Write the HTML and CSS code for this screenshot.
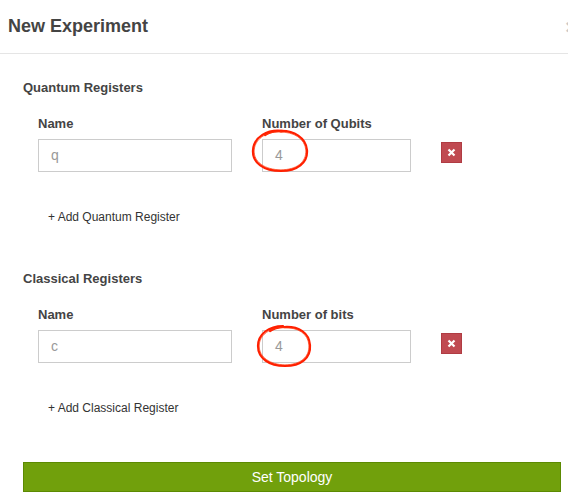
FILE: index.html
```html
<!DOCTYPE html>
<html>
<head>
<meta charset="utf-8">
<link rel="stylesheet" href="styles.css">
</head>
<body>
<div class="modal">
  <div class="modal-header">
    <h1 class="title">New Experiment</h1>
    <span class="close">×</span>
  </div>
  <div class="modal-body">
    <section class="section">
      <h2 class="section-title">Quantum Registers</h2>
      <div class="reg-row">
        <div class="field field-name">
          <label class="label">Name</label>
          <div class="input">q</div>
        </div>
        <div class="field field-num">
          <label class="label">Number of Qubits</label>
          <div class="input num-input">4
            <svg class="mark" width="64" height="46" viewBox="0 0 64 46"><path d="M34 3 C18 1 5 9 4 22 C3 35 15 43 32 43 C48 43 59 35 58 22 C57 10 45 2 30 3 C24 3.5 19 5 16 7" fill="none" stroke="#ff1f00" stroke-width="2.2" stroke-linecap="round"/><path d="M33 4.2 C19 2.5 6.2 10 5.2 22 C4.3 34 16 41.8 32 41.8 C47 41.8 57.6 34.5 56.8 22 C56 11 45 3.5 31 4.2" fill="none" stroke="#ff3a10" stroke-width="1" stroke-linecap="round" opacity="0.7"/></svg>
          </div>
        </div>
        <button class="del" aria-label="remove"><svg width="9" height="9" viewBox="0 0 9 9"><path d="M1.5 1.5 L7.5 7.5 M7.5 1.5 L1.5 7.5" stroke="#fff" stroke-width="2.2"/></svg></button>
      </div>
      <div class="add-link">+ Add Quantum Register</div>
    </section>
    <section class="section">
      <h2 class="section-title">Classical Registers</h2>
      <div class="reg-row">
        <div class="field field-name">
          <label class="label">Name</label>
          <div class="input">c</div>
        </div>
        <div class="field field-num">
          <label class="label">Number of bits</label>
          <div class="input num-input">4
            <svg class="mark mark2" width="64" height="46" viewBox="0 0 64 46"><path d="M30 3 C16 3 5 11 5 23 C5 35 16 43 32 43 C48 43 58 35 57 22 C56 10 46 3 31 4 C25 4.5 20 6 17 8" fill="none" stroke="#ff1f00" stroke-width="2.2" stroke-linecap="round"/><path d="M31 4.3 C17 4.3 6.2 12 6.2 23 C6.2 34 17 41.8 32 41.8 C47 41.8 56.6 34.3 55.9 22 C55 11 45.5 4 31 5" fill="none" stroke="#ff3a10" stroke-width="1" stroke-linecap="round" opacity="0.7"/></svg>
          </div>
        </div>
        <button class="del" aria-label="remove"><svg width="9" height="9" viewBox="0 0 9 9"><path d="M1.5 1.5 L7.5 7.5 M7.5 1.5 L1.5 7.5" stroke="#fff" stroke-width="2.2"/></svg></button>
      </div>
      <div class="add-link">+ Add Classical Register</div>
    </section>
    <button class="primary">Set Topology</button>
  </div>
</div>
</body>
</html>
```

FILE: styles.css
```css
html, body {
  margin: 0;
  padding: 0;
  background: #fff;
  overflow: hidden;
}
body {
  font-family: "Liberation Sans", Arial, Helvetica, sans-serif;
  color: #444;
  width: 568px;
  height: 502px;
}
.modal {
  width: 568px;
}
.modal-header {
  display: flex;
  justify-content: space-between;
  align-items: flex-start;
  padding: 15px 0 15px 8px;
  border-bottom: 1px solid #e5e5e5;
}
.title {
  margin: 0;
  font-size: 18px;
  line-height: 22px;
  font-weight: bold;
  color: #444;
}
.close {
  font-size: 20px;
  line-height: 22px;
  font-weight: bold;
  color: #c8c8c8;
  margin-right: -9px;
  margin-top: 1px;
}
.modal-body {
  padding: 25px 7px 0 23px;
}
.section-title {
  margin: 0 0 18px 0;
  font-size: 13px;
  line-height: 18px;
  font-weight: bold;
  color: #444;
}
.reg-row {
  display: flex;
  align-items: flex-end;
  gap: 30px;
  padding-left: 15px;
}
.field {
  display: flex;
  flex-direction: column;
  gap: 6px;
}
.field-name { width: 194px; }
.field-num { width: 149px; }
.label {
  font-size: 13px;
  line-height: 18px;
  font-weight: bold;
  color: #444;
}
.input {
  position: relative;
  box-sizing: border-box;
  height: 33px;
  border: 1px solid #ccc;
  padding: 0 12px;
  font-size: 14px;
  line-height: 31px;
  color: #999;
}
.mark {
  position: absolute;
  left: -14px;
  top: -12px;
}
.mark2 {
  left: -10px;
  top: -8px;
}
.del {
  box-sizing: border-box;
  width: 21px;
  height: 21px;
  margin-bottom: 9px;
  padding: 0;
  border: 1px solid #b03c43;
  background: #c04a51;
  display: flex;
  align-items: center;
  justify-content: center;
}
.add-link {
  margin: 37px 0 0 25px;
  font-size: 12px;
  line-height: 16px;
  color: #333;
}
.section + .section {
  margin-top: 45px;
}
.primary {
  display: block;
  box-sizing: border-box;
  width: 538px;
  height: 30px;
  margin-top: 46px;
  border: 1px solid #5c8a02;
  background: #71a00c;
  color: #fff;
  font-family: "Liberation Sans", Arial, sans-serif;
  font-size: 14px;
  padding: 0;
}
```
